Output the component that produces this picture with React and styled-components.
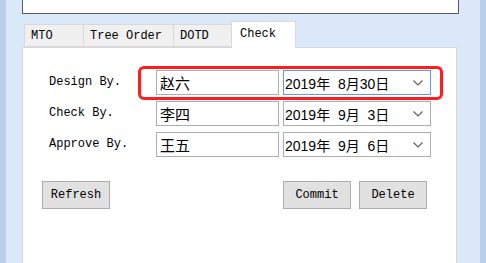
import React from "react";
import styled, { createGlobalStyle } from "styled-components";

const Global = createGlobalStyle`
  html, body { margin: 0; padding: 0; background: #dae8f9; overflow: hidden; }
  #root { width: 486px; height: 263px; }
`;

const Frame = styled.div`
  box-sizing: border-box;
  width: 486px;
  height: 263px;
  border-left: 6px solid #b8d0ea;
  border-right: 6px solid #b8d0ea;
  background: #dae8f9;
  padding-left: 16px;
  display: flex;
  flex-direction: column;
  font-family: "Liberation Mono", "Noto Sans CJK SC", monospace;
  font-size: 12px;
  color: #000;
`;

const TopBox = styled.div`
  box-sizing: border-box;
  width: 437px;
  height: 14px;
  background: #fff;
  border: 1px solid #5a5a5a;
  border-top: none;
`;

const TabStrip = styled.div`
  display: flex;
  align-items: flex-end;
  margin-top: 7px;
  padding-left: 3px;
  height: 26px;
  position: relative;
  z-index: 2;
`;

const Tab = styled.div`
  box-sizing: border-box;
  width: ${(p) => p.$w}px;
  height: ${(p) => (p.$active ? 27 : 23)}px;
  margin-bottom: ${(p) => (p.$active ? -1 : 0)}px;
  background: ${(p) => (p.$active ? "#fff" : "#f0f0f0")};
  border: 1px solid #d9d9d9;
  border-bottom: ${(p) => (p.$active ? "none" : "1px solid #d9d9d9")};
  margin-left: -1px;
  padding-left: ${(p) => p.$pl}px;
  display: flex;
  align-items: center;
  padding-bottom: ${(p) => (p.$active ? 2 : 0)}px;
  white-space: pre;
`;

const Panel = styled.div`
  position: relative;
  box-sizing: border-box;
  width: 435px;
  flex: 1;
  background: #fff;
  border: 1px solid #d9d9d9;
  border-bottom: none;
  box-shadow: 1px 0 0 #e6e6e6;
  padding: 22px 28px 0 19px;
`;

const Form = styled.div`
  display: grid;
  grid-template-columns: 103px 123px 148px;
  column-gap: 4px;
  row-gap: 6px;
  padding-left: 7px;
`;

const Label = styled.div`
  height: 25px;
  display: flex;
  align-items: center;
  padding-bottom: 2px;
  box-sizing: border-box;
  white-space: pre;
`;

const TextBox = styled.div`
  box-sizing: border-box;
  height: 25px;
  border: 1px solid #abadb3;
  padding-left: 3px;
  display: flex;
  align-items: center;
  font-family: "Noto Sans CJK SC", sans-serif;
  font-size: 15px;
  line-height: 1;
`;

const DateBox = styled.div`
  box-sizing: border-box;
  height: 25px;
  border: 1px solid ${(p) => (p.$focus ? "#5b9de1" : "#abadb3")};
  padding: 0 7px 0 1px;
  display: flex;
  align-items: center;
  justify-content: space-between;
  font-family: "Liberation Sans", "Noto Sans CJK SC", sans-serif;
  font-size: 14px;
  white-space: pre;
`;

const Chevron = () => (
  <svg width="10" height="6" viewBox="0 0 10 6">
    <path d="M0.5 0.5 L5 5 L9.5 0.5" fill="none" stroke="#606060" strokeWidth="1.2" />
  </svg>
);

const ButtonRow = styled.div`
  display: flex;
  align-items: center;
  margin-top: 24px;
  gap: 8px;
`;

const Button = styled.div`
  box-sizing: border-box;
  width: 68px;
  height: 28px;
  background: #e1e1e1;
  border: 1px solid #adadad;
  display: flex;
  align-items: center;
  justify-content: center;
  margin-left: ${(p) => p.$ml || 0}px;
`;

const Highlight = styled.div`
  position: absolute;
  left: 115px;
  top: 18px;
  width: 305px;
  height: 34px;
  box-sizing: border-box;
  border: 3px solid #ff1c1c;
  border-radius: 6px;
  pointer-events: none;
`;

const rows = [
  { label: "Design By.", name: "赵六", date: "2019年\u20078月30日", focus: true },
  { label: "Check By.", name: "李四", date: "2019年\u20079月\u20073日" },
  { label: "Approve By.", name: "王五", date: "2019年\u20079月\u20076日" },
];

const tabs = [
  { t: "MTO", w: 60, pl: 6 },
  { t: "Tree Order", w: 91, pl: 6 },
  { t: "DOTD", w: 59, pl: 6 },
  { t: "Check", w: 65, pl: 8, active: true },
];

export default function App() {
  return (
    <>
      <Global />
      <Frame>
        <TopBox />
        <TabStrip>
          {tabs.map((tb) => (
            <Tab key={tb.t} $w={tb.w} $pl={tb.pl} $active={tb.active}>
              {tb.t}
            </Tab>
          ))}
        </TabStrip>
        <Panel>
          <Form>
            {rows.map((r) => (
              <React.Fragment key={r.label}>
                <Label>{r.label}</Label>
                <TextBox>{r.name}</TextBox>
                <DateBox $focus={r.focus}>
                  <span>{r.date}</span>
                  <Chevron />
                </DateBox>
              </React.Fragment>
            ))}
          </Form>
          <ButtonRow>
            <Button>Refresh</Button>
            <Button $ml={165}>Commit</Button>
            <Button>Delete</Button>
          </ButtonRow>
          <Highlight />
        </Panel>
      </Frame>
    </>
  );
}
